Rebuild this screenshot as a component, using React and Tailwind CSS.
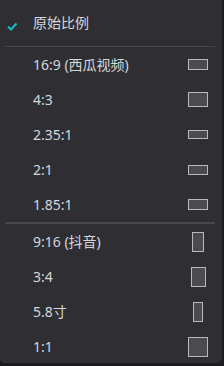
const first = [
  { label: "16:9 (西瓜视频)", w: 20, h: 11 },
  { label: "4:3", w: 20, h: 15 },
  { label: "2.35:1", w: 20, h: 9 },
  { label: "2:1", w: 20, h: 10 },
  { label: "1.85:1", w: 20, h: 11 },
];

const second = [
  { label: "9:16 (抖音)", w: 12, h: 20 },
  { label: "3:4", w: 15, h: 20 },
  { label: "5.8寸", w: 10, h: 20 },
  { label: "1:1", w: 20, h: 20 },
];

function RatioBox({ w, h }) {
  return (
    <div className="w-5 flex items-center justify-center">
      <div
        className="border border-[#b9b9b9] bg-[#4b4b4d]"
        style={{ width: w, height: h }}
      />
    </div>
  );
}

function Row({ label, w, h }) {
  return (
    <div className="h-[35px] flex items-center pl-[33px] pr-[14px]">
      <span className="flex-1 text-[14px] text-[#d3d7de]">{label}</span>
      <RatioBox w={w} h={h} />
    </div>
  );
}

export default function App() {
  return (
    <div
      className="w-[224px] h-[366px] bg-[#1c1c1e] overflow-hidden"
      style={{ fontFamily: '"Noto Sans", "Noto Sans CJK SC", sans-serif' }}
    >
      <div className="w-[222px] h-[363px] bg-[#2f2f33] rounded-b-[5px] pt-[5px] overflow-hidden">
        {/* current choice */}
        <div className="h-[35px] flex items-center">
          <svg width="33" height="35" viewBox="0 0 33 35" className="shrink-0">
            <path d="M8 21.5 L11 24.5 L16.5 18.5" fill="none" stroke="#1bb9cc" strokeWidth="2" />
          </svg>
          <span className="text-[14px] text-[#d3d7de]">原始比例</span>
        </div>

        <div className="mt-[6px] ml-[5px] w-[210px] h-px bg-[#48484c]" />

        {first.map((r) => (
          <Row key={r.label} {...r} />
        ))}

        <div className="ml-[5px] w-[210px] h-[2px] bg-[#48484c]" />

        {second.map((r) => (
          <Row key={r.label} {...r} />
        ))}
      </div>
    </div>
  );
}
